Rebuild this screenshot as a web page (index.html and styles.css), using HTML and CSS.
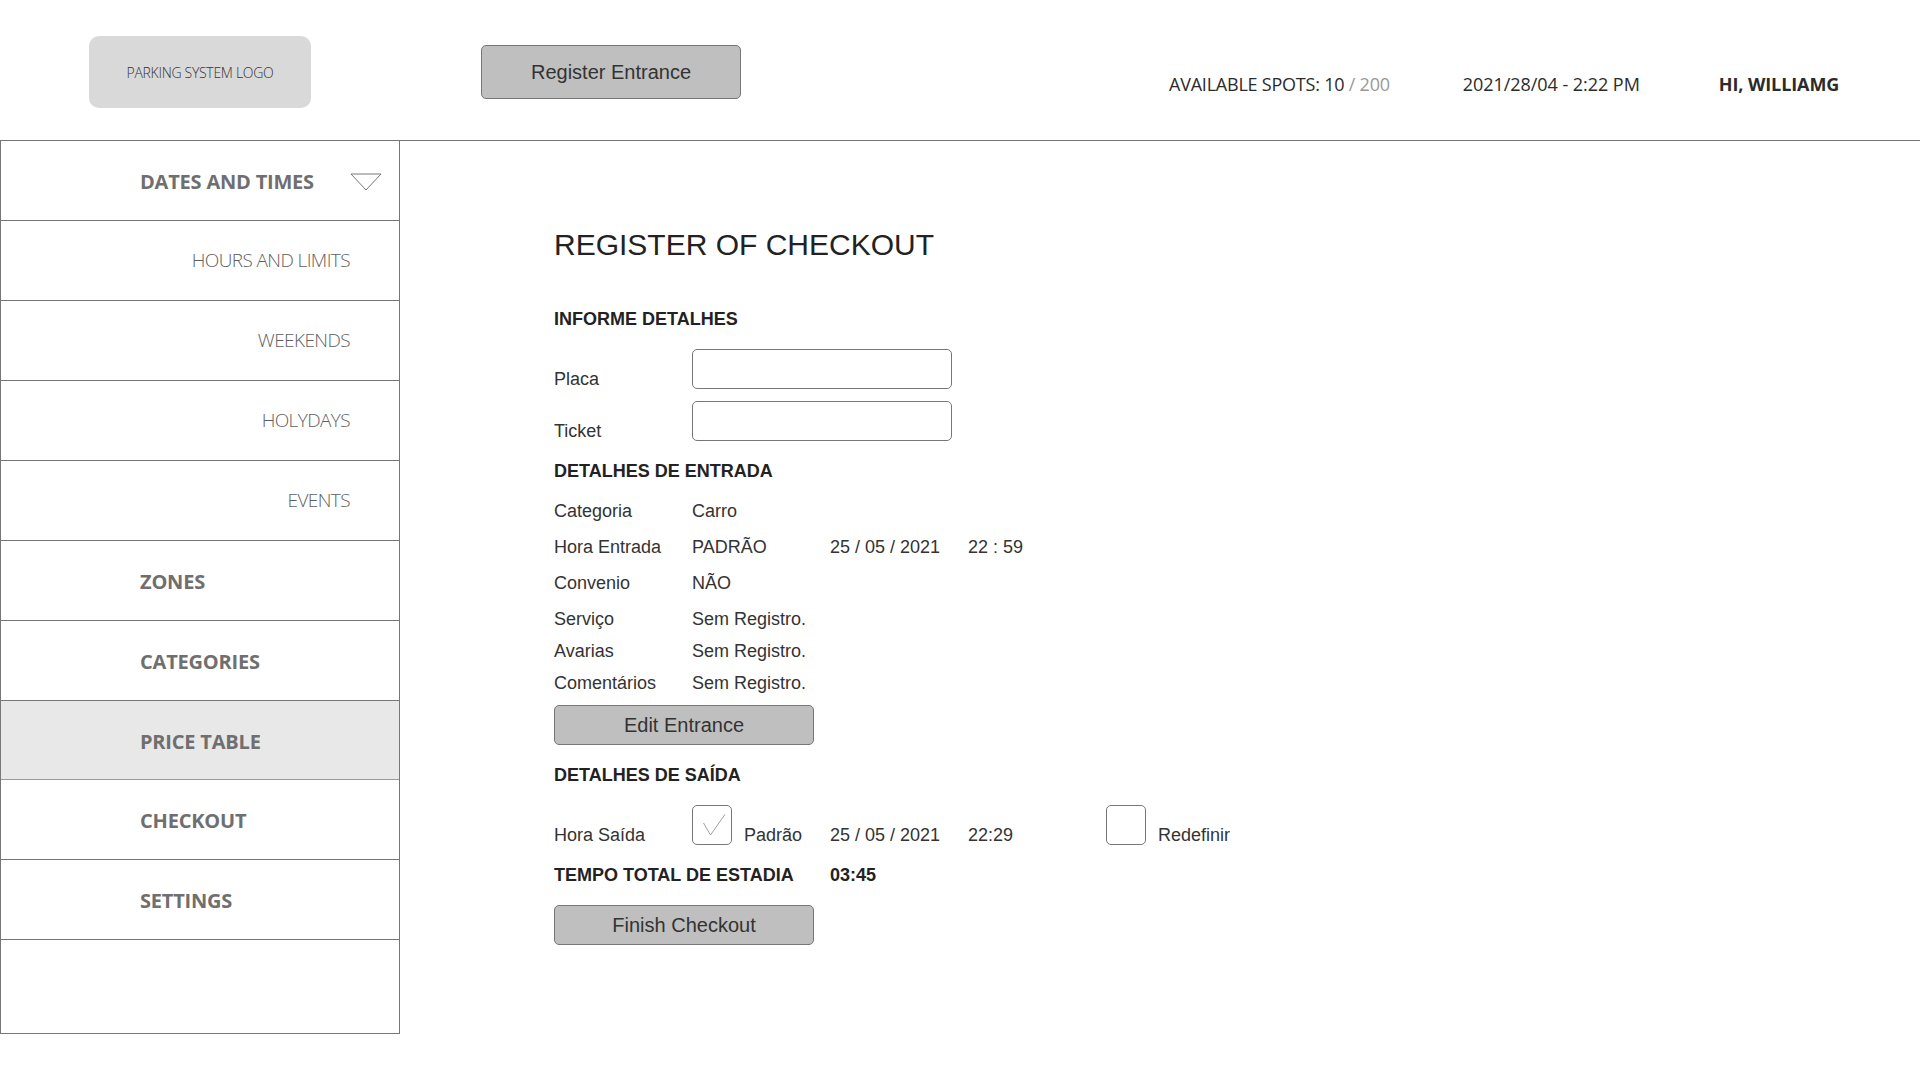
FILE: index.html
```html
<!DOCTYPE html>
<html lang="en">
<head>
<meta charset="utf-8">
<title>Register of Checkout</title>
<link rel="stylesheet" href="styles.css">
</head>
<body>
<header class="topbar">
  <div class="logo">PARKING SYSTEM LOGO</div>
  <button class="btn btn-entrance">Register Entrance</button>
  <div class="status">
    <span class="spots">AVAILABLE SPOTS: 10 <span class="muted">/ 200</span></span>
    <span class="clock">2021/28/04 - 2:22 PM</span>
    <span class="user">HI, WILLIAMG</span>
  </div>
</header>
<div class="layout">
  <nav class="sidebar">
    <div class="nav-row nav-main">DATES AND TIMES
      <svg class="caret" width="32" height="18" viewBox="0 0 32 18"><path d="M1 1H31L16 17Z" fill="none" stroke="#777" stroke-width="1"/></svg>
    </div>
    <div class="nav-row nav-sub">HOURS AND LIMITS</div>
    <div class="nav-row nav-sub">WEEKENDS</div>
    <div class="nav-row nav-sub">HOLYDAYS</div>
    <div class="nav-row nav-sub">EVENTS</div>
    <div class="nav-row nav-main">ZONES</div>
    <div class="nav-row nav-main">CATEGORIES</div>
    <div class="nav-row nav-main active">PRICE TABLE</div>
    <div class="nav-row nav-main">CHECKOUT</div>
    <div class="nav-row nav-main">SETTINGS</div>
  </nav>
  <main class="content">
    <h1 class="title">REGISTER OF CHECKOUT</h1>
    <h2 class="heading h-first">INFORME DETALHES</h2>
    <div class="field f-placa"><span class="label">Placa</span><span class="input"></span></div>
    <div class="field f-ticket"><span class="label">Ticket</span><span class="input"></span></div>
    <h2 class="heading h-entry">DETALHES DE ENTRADA</h2>
    <div class="row r-20"><span class="label">Categoria</span><span class="val">Carro</span></div>
    <div class="row r-16"><span class="label">Hora Entrada</span><span class="val">PADRÃO</span><span class="val">25 / 05 / 2021</span><span>22 : 59</span></div>
    <div class="row r-16"><span class="label">Convenio</span><span class="val">NÃO</span></div>
    <div class="row r-16"><span class="label">Serviço</span><span class="val">Sem Registro.</span></div>
    <div class="row r-12"><span class="label">Avarias</span><span class="val">Sem Registro.</span></div>
    <div class="row r-12"><span class="label">Comentários</span><span class="val">Sem Registro.</span></div>
    <button class="btn btn-form b-edit">Edit Entrance</button>
    <h2 class="heading h-exit">DETALHES DE SAÍDA</h2>
    <div class="field f-exit">
      <span class="label">Hora Saída</span>
      <span class="check">
        <svg width="28" height="26" viewBox="0 0 28 26"><path d="M5.5 11L12.5 23L27 2.3" fill="none" stroke="#888" stroke-width="0.8"/></svg>
      </span>
      <span class="opt opt-a">Padrão</span>
      <span class="opt opt-date">25 / 05 / 2021</span>
      <span class="opt opt-time">22:29</span>
      <span class="check"></span>
      <span class="opt opt-b">Redefinir</span>
    </div>
    <div class="total"><span class="total-label">TEMPO TOTAL DE ESTADIA</span><span>03:45</span></div>
    <button class="btn btn-form b-finish">Finish Checkout</button>
  </main>
</div>
</body>
</html>
```
FILE: styles.css
```css
* { box-sizing: border-box; }
html, body { margin: 0; background: #fff; }
body { font-family: "Liberation Sans", Arial, sans-serif; color: #333; font-size: 18px; }

.topbar {
  height: 141px;
  border-bottom: 1px solid #777;
  display: flex;
  align-items: flex-start;
  padding-left: 89px;
}
.logo {
  width: 222px; height: 72px; margin-top: 36px;
  background: #d9d9d9; border-radius: 10px;
  display: flex; align-items: center; justify-content: center;
  font-family: "Open Sans", sans-serif; font-weight: 300; font-size: 14px; letter-spacing: -0.3px; color: #333;
}
.btn {
  display: block; padding: 0;
  background: #bfbfbf; border: 1px solid #777; border-radius: 5px;
  font-family: "Liberation Sans", Arial, sans-serif; font-size: 20px; color: #333;
}
.btn-entrance { width: 260px; height: 54px; margin: 45px 0 0 170px; }
.status {
  display: flex; margin: 71px 0 0 428px; height: 26px; align-items: center;
  font-family: "Open Sans", sans-serif; font-size: 18px; color: #2b2b2b;
}
.spots { letter-spacing: -0.22px; }
.muted { color: #999; }
.clock { margin-left: 73px; letter-spacing: -0.05px; }
.user { margin-left: 79px; font-weight: 700; letter-spacing: -0.1px; }

.layout { display: flex; align-items: flex-start; }
.sidebar {
  width: 400px; height: 893px;
  border: solid #777; border-width: 0 1px 1px 1px;
}
.nav-row {
  height: 80px; border-bottom: 1px solid #777;
  display: flex; align-items: center;
  font-family: "Open Sans", sans-serif; font-size: 20px; color: #6f6f6f; position: relative;
}
.nav-main { padding: 2px 0 0 139px; font-weight: 700; letter-spacing: -0.2px; }
.nav-sub { justify-content: flex-end; padding: 0 49px 2px 0; font-weight: 300; font-size: 19px; letter-spacing: -0.6px; color: #5f5f5f; }
.active { background: #e8e8e8; height: 79px; border-bottom-color: #999; }
.caret { position: absolute; left: 349px; top: 32px; }

.content { padding: 84px 0 0 154px; flex: 1; }
.title { margin: 0; font-size: 30px; font-weight: 400; line-height: 40px; color: #222; }
.heading { margin: 0; font-size: 18px; font-weight: 700; line-height: 20px; color: #222; }
.h-first { margin-top: 44px; }
.h-entry { margin-top: 20px; }
.h-exit { margin-top: 20px; }

.label { width: 138px; line-height: 20px; flex: none; }
.field { display: flex; align-items: flex-end; }
.f-placa { margin-top: 20px; }
.f-ticket { margin-top: 12px; }
.f-exit { margin-top: 20px; }
.input { width: 260px; height: 40px; border: 1px solid #777; border-radius: 5px; background: #fff; display: block; }

.row { display: flex; line-height: 20px; }
.val { width: 138px; flex: none; }
.r-20 { margin-top: 20px; }
.r-16 { margin-top: 16px; }
.r-12 { margin-top: 12px; }

.btn-form { width: 260px; height: 40px; }
.b-edit { margin-top: 12px; }
.b-finish { margin-top: 20px; }

.check {
  width: 40px; height: 40px; border: 1px solid #777; border-radius: 5px; flex: none;
  display: flex; align-items: center; justify-content: center;
}
.opt { line-height: 20px; }
.opt-a { margin-left: 12px; width: 86px; }
.opt-date { width: 138px; }
.opt-time { width: 138px; }
.opt-b { margin-left: 12px; }

.total { display: flex; margin-top: 20px; font-weight: 700; line-height: 20px; color: #222; }
.total-label { width: 276px; }
```
